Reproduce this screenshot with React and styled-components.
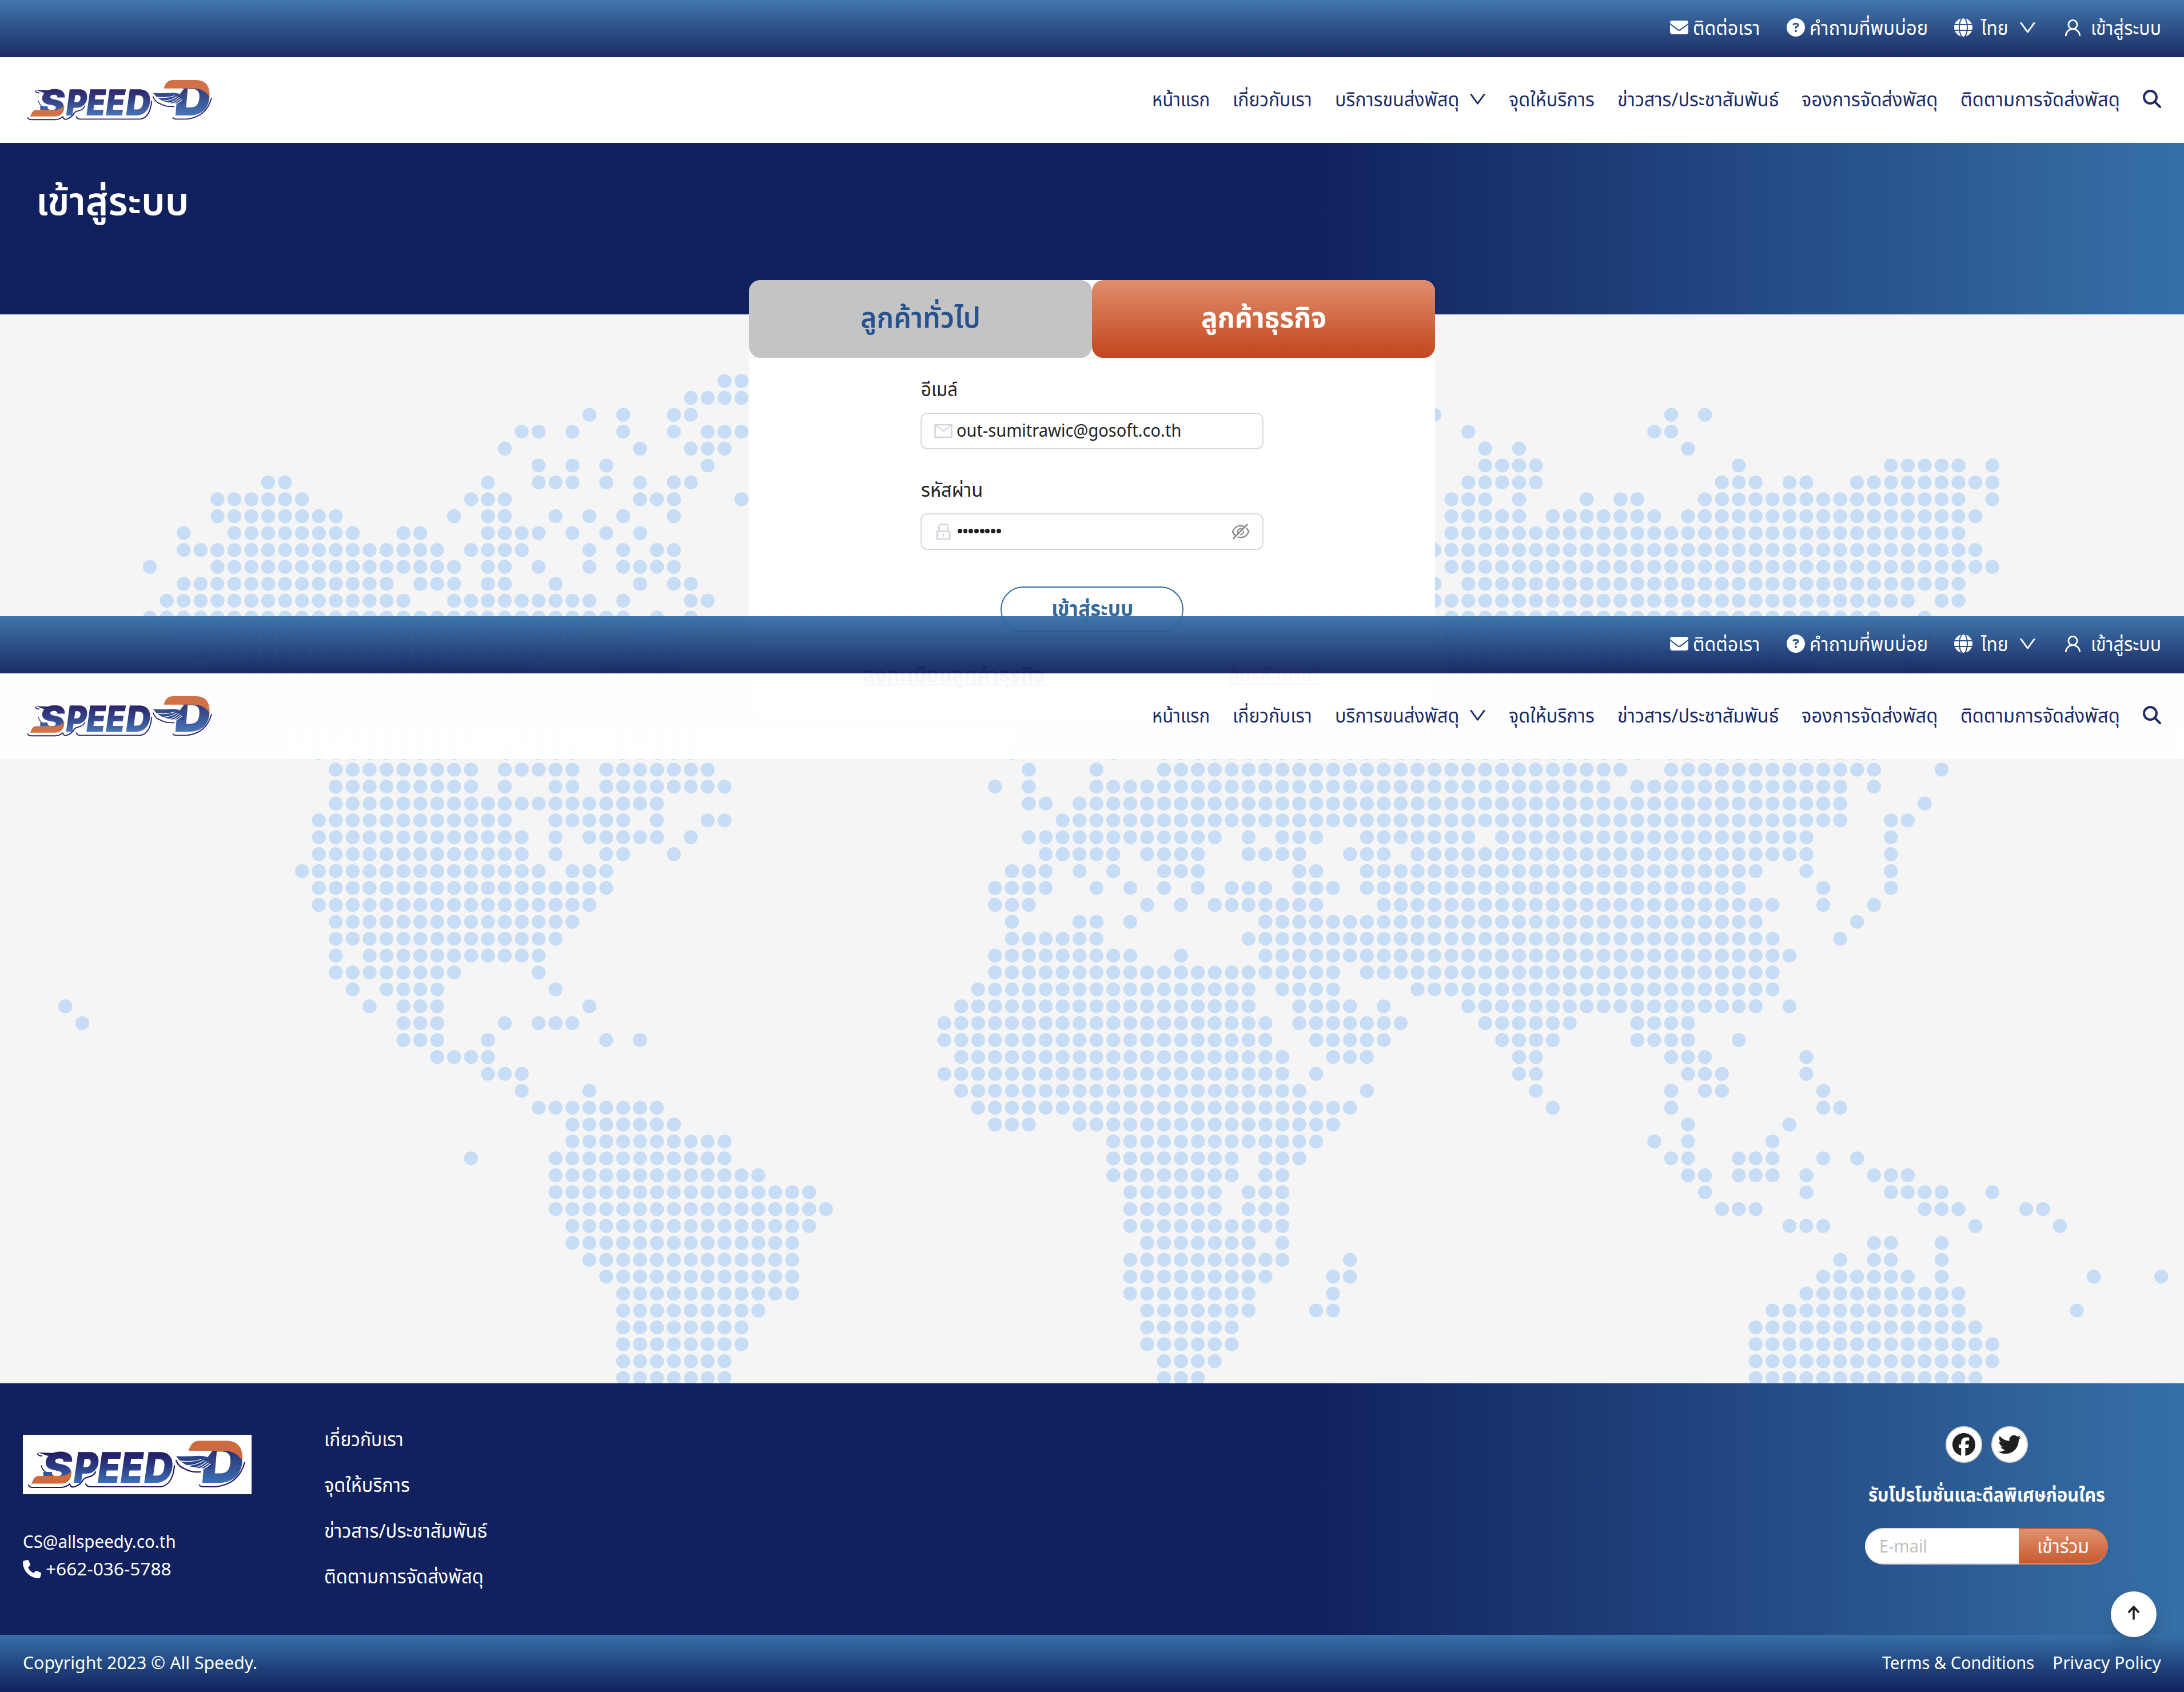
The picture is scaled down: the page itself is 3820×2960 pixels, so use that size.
import React, { useLayoutEffect, useRef, useState } from "react";
import styled, { createGlobalStyle, css } from "styled-components";
import {
  FaEnvelope,
  FaCircleQuestion,
  FaGlobe,
  FaMagnifyingGlass,
  FaPhone,
  FaFacebook,
  FaTwitter,
} from "react-icons/fa6";
import {
  AiOutlineDown,
  AiOutlineUser,
  AiOutlineMail,
  AiOutlineLock,
  AiOutlineEyeInvisible,
} from "react-icons/ai";

const color = {
  navy: "#10215d",
  blue: "#3670a8",
  link: "#336a9e",
  text: "#222222",
  line: "#d9d9d9",
  page: "#f5f5f5",
};

const GlobalStyle = createGlobalStyle`
  *, *::before, *::after { box-sizing: border-box; }
  body {
    margin: 0;
    background: #ffffff;
    color: ${color.text};
    font-family: "Noto Sans", "Noto Sans Thai", sans-serif;
    font-size: 32px;
  }
`;

/* ---------- text that fills a known measure ---------- */

const FitBox = styled.span`
  display: inline-block;
  flex: none;
  white-space: nowrap;
  line-height: inherit;
  text-align: left;
  font-size: ${(p) => (p.$latin ? 0.94 : 1.05)}em;
`;

const FitInner = styled.span`
  display: inline-block;
  transform-origin: 0 50%;
`;

function Fit({ w, latin, children }) {
  const ref = useRef(null);
  const [scale, setScale] = useState(1);
  useLayoutEffect(() => {
    if (ref.current) setScale(w / ref.current.offsetWidth);
  }, [w, children]);
  return (
    <FitBox $latin={latin} style={{ width: w }}>
      <FitInner ref={ref} style={{ transform: `scaleX(${scale})` }}>
        {children}
      </FitInner>
    </FitBox>
  );
}

/* ---------- logo ---------- */

const LogoSvg = styled.svg`
  display: block;
  flex: none;
  width: ${(p) => p.$width}px;
  height: ${(p) => p.$width * 0.26}px;
  overflow: visible;
  background: #ffffff;
`;

const LogoLetter = styled.text`
  font-family: Inter, "Liberation Sans", sans-serif;
  font-weight: 900;
`;

const LETTERS = [
  { ch: "S", x: 31, w: 53 },
  { ch: "P", x: 86, w: 43 },
  { ch: "E", x: 128, w: 39 },
  { ch: "E", x: 168, w: 39 },
  { ch: "D", x: 209, w: 51 },
];

function Logo({ width, id }) {
  const ink = `url(#${id}-ink)`;
  const inkD = `url(#${id}-inkd)`;
  return (
    <LogoSvg $width={width} viewBox="0 0 400 104">
      <defs>
        <linearGradient id={`${id}-ink`} gradientUnits="userSpaceOnUse" x1="0" y1="-54" x2="0" y2="0">
          <stop offset="0" stopColor="#231a63" />
          <stop offset="0.45" stopColor="#2a3a82" />
          <stop offset="1" stopColor="#3d6fb5" />
        </linearGradient>
        <linearGradient id={`${id}-inkd`} gradientUnits="userSpaceOnUse" x1="0" y1="-58" x2="0" y2="0">
          <stop offset="0" stopColor="#26306f" />
          <stop offset="1" stopColor="#3d6fb5" />
        </linearGradient>
      </defs>
      <g fill="none" stroke="#231a63" strokeWidth="2.2" strokeLinecap="round" strokeLinejoin="round">
        <path d="M26 33 Q27 37 33 37" />
        <path d="M32 54 Q34 62 41 66" strokeWidth="1.6" />
        <path d="M10 88 Q11 92 17 92 H68 Q77 91 82 86 Q84 93 90 91 Q101 88 106 78 Q109 75 114 74 Q124 72 127 65" />
        <path d="M110 86 Q112 91 118 91 H241 Q262 88 265 54" />
        <path d="M268 45 Q272 56 284 60 Q294 66 311 65" />
        <path d="M309 88 Q310 91 316 91 H338 Q378 86 388 48" />
      </g>
      {LETTERS.map((l, i) => (
        <g key={i} transform={`translate(${l.x} 84) skewX(-8)`}>
          <LogoLetter fontSize="74" textLength={l.w} lengthAdjust="spacingAndGlyphs" fill={ink}>
            {l.ch}
          </LogoLetter>
        </g>
      ))}
      <path d="M26 31 L60 32 L44 37 Z" fill="#231a63" />
      <path d="M15 85.5 L19 77 Q22 72 29 72 H66 Q80 71 85 63 Q86 76 78 82 Q73 85.5 66 85.5 Z" fill="#cf6a3f" />
      <g transform="translate(309 84) skewX(-5)">
        <LogoLetter fontSize="98" textLength="75" lengthAdjust="spacingAndGlyphs" fill={inkD}>
          D
        </LogoLetter>
      </g>
      <path d="M288 30 V8 H330 V30 Z" fill="#ffffff" />
      <path d="M312 29 H331 L325 37 L318 46 H312 Z" fill="#ffffff" />
      <path d="M290 28 Q294 10.5 309 10.5 H358 Q386 12 384 45 Q372 28 352 28 Z" fill="#cf6a3f" />
      <path
        d="M268 37.5 Q290 38 303 37 Q322 35 330 45 Q334 50 332 58 Q325 63 320 57 Q310 60 300 57 Q280 54 268 37.5 Z"
        fill="#2b4488"
      />
      <g fill="none" stroke="#ffffff" strokeWidth="1.3" strokeLinecap="round">
        <path d="M275 46 Q298 48 312 43" />
        <path d="M286 54 Q304 53 317 45" />
        <path d="M300 58 Q312 55 321 47" />
        <path d="M309 59 Q318 55 325 49" />
        <path d="M317 59 Q324 55 328 51" />
      </g>
    </LogoSvg>
  );
}

/* ---------- header ---------- */

const Header = styled.header`
  position: absolute;
  left: 0;
  top: ${(p) => p.$top}px;
  z-index: 5;
  width: 100%;
  opacity: 0.95;
`;

const TopBar = styled.div`
  display: flex;
  justify-content: flex-end;
  align-items: center;
  height: 100px;
  padding: 0 40px 4px;
  color: #ffffff;
  background: linear-gradient(180deg, ${color.blue}, ${color.navy});
`;

const TopLink = styled.a`
  display: flex;
  align-items: center;
  gap: ${(p) => p.$gap}px;
  margin-left: ${(p) => p.$before}px;
  line-height: 48px;
`;

const IconSlot = styled.span`
  display: flex;
  flex: none;
  color: ${(p) => p.$color || "inherit"};
  font-size: ${(p) => p.$size}px;
`;

const NavBar = styled.nav`
  display: flex;
  justify-content: space-between;
  align-items: center;
  height: 150px;
  padding: 0 40px;
  color: ${color.navy};
  background: #ffffff;
`;

const NavList = styled.div`
  display: flex;
  align-items: center;
  gap: 40px;
  padding-bottom: 4px;
`;

const NavItem = styled.a`
  display: flex;
  align-items: center;
  gap: 14px;
  margin-right: ${(p) => (p.$menu ? -4 : 0)}px;
  line-height: 48px;
`;

const NAV = [
  { label: "หน้าแรก", w: 101 },
  { label: "เกี่ยวกับเรา", w: 139 },
  { label: "บริการขนส่งพัสดุ", w: 217, menu: true },
  { label: "จุดให้บริการ", w: 150 },
  { label: "ข่าวสาร/ประชาสัมพันธ์", w: 282 },
  { label: "จองการจัดส่งพัสดุ", w: 238 },
  { label: "ติดตามการจัดส่งพัสดุ", w: 279 },
];

function SiteHeader({ top, id }) {
  return (
    <Header $top={top}>
      <TopBar>
        <TopLink $gap={8} $before={0}>
          <IconSlot $size={32}><FaEnvelope /></IconSlot>
          <Fit w={117}>ติดต่อเรา</Fit>
        </TopLink>
        <TopLink $gap={8} $before={47}>
          <IconSlot $size={32}><FaCircleQuestion /></IconSlot>
          <Fit w={207}>คำถามที่พบบ่อย</Fit>
        </TopLink>
        <TopLink $gap={15} $before={46}>
          <IconSlot $size={32}><FaGlobe /></IconSlot>
          <Fit w={48}>ไทย</Fit>
          <IconSlot $size={37}><AiOutlineDown /></IconSlot>
        </TopLink>
        <TopLink $gap={13} $before={42}>
          <IconSlot $size={37}><AiOutlineUser /></IconSlot>
          <Fit w={123}>เข้าสู่ระบบ</Fit>
        </TopLink>
      </TopBar>
      <NavBar>
        <Logo width={340} id={id} />
        <NavList>
          {NAV.map((n) => (
            <NavItem key={n.label} $menu={n.menu}>
              <Fit w={n.w}>{n.label}</Fit>
              {n.menu && <IconSlot $size={37}><AiOutlineDown /></IconSlot>}
            </NavItem>
          ))}
          <IconSlot $size={32}><FaMagnifyingGlass /></IconSlot>
        </NavList>
      </NavBar>
    </Header>
  );
}

/* ---------- dotted world map ---------- */

const MAP_ROWS = [
  "39-40",
  "37-40",
  "31,33,36-37,81,95,97",
  "27-28,30,33,36,38-40,83,94-95",
  "26,34,37-39,84,86,96",
  "28,30,32,38,84-87,99,108-112,114",
  "12-13,25,28-30,32,34,36-37,83-87,98-100,102-103,106-114",
  "9-14,24-26,34-36,40,82-84,86,90,92-93,97-112,114",
  "9-16,23,25-26,29,31,33,36,82-86,88-94,96-113",
  "7,10-17,20-21,25-28,30,32,34,82-112",
  "7-22,24-27,31,33,35-36,81-113",
  "5,9-23,25-26,28,31,33-36,82-114",
  "7-19,21-23,25-26,29,34,36-37,81,83-112",
  "6-20,23-31,33,37-38,81-109,111-112",
  "5-33,35,37,82-107,110",
  "7-30,34-36,82-106,110",
  "8-28,33-36,82-104,109",
  "9-27,32-36,82-103,109-110",
  "12-26,32-35,82-103,109-111",
  "13-26,32-36,82-104,110",
  "14-25,28,32-36,61-64,66-104,110",
  "14-24,27-29,33-37,60,62-63,66-69,71-104",
  "15-23,26,28-30,33-37,56,62,65-93,95-107",
  "16-24,26-30,32-38,57,61,65-92,95-107,111",
  "16-24,26,29-30,32-39,55,57,61-91,93-105,107",
  "16-35,57-58,60-105,110",
  "15-26,29-33,35,38-39,59-105,108-109",
  "15-27,29,31-35,37,57-68,70,72-74,77-83,85-103,108",
  "15-27,29,32-33,36,58-62,64-67,70-73,76-78,80-103,108",
  "14-28,30-32,56-58,60,62,65-67,73-74,77-100,103,108",
  "15-32,55-58,61,63,65,67,69-71,73-75,77-99,104,108",
  "15-31,55-57,64,66,68-74,78-101,104,107",
  "16-30,56,60-61,63,71-100,106",
  "16-29,56-61,70-101,105",
  "16,18-28,55-63,66,71-102",
  "16-23,28,55-75,77-101",
  "17,19-22,29,54-70,72-75,80-101",
  "0,18,20-22,31,53-70,73-76,78,83-100,102",
  "1,20-22,26,28-30,52-71,73-79,84-89,93-96",
  "20-22,25,32,34,52-71,74-78,85-88,93-96,99",
  "22-25,53-72,75-77,86-87,95-97,103",
  "25-27,52-72,74,86-87,96-98,103",
  "27,31,53-73,77,87,95,97-98,104",
  "28-35,54-76,88,95,104-105",
  "30-36,55-57,60-75,96,102",
  "30-39,62-74,94,96,101",
  "24,29-39,62-69,71-73,95-96,99-101,104,106",
  "29-41,62-69,71-72,96-97,99-101,103,107-109",
  "29-44,63-68,70-72,97,103,108-111,114",
  "29-45,63-68,70-72,98-100,110-112,116-117",
  "30-44,63-72,102-104,113,118",
  "30-43,64-70,72,107-108,111",
  "31-43,63-72,76,105,107-108,111",
  "32-43,63-71,75-76,104-109,111,120,124",
  "33-43,63-70,75,103-112",
  "33-41,64-70,74-75,101-112,119",
  "33-40,64-69,100-113",
  "33-40,64-69,100-114",
  "33-39,65-68,100-114",
  "33-39,65-67,100-113",
];

const STEP = 29.565;

const DOTS = MAP_ROWS.flatMap((row, r) =>
  row.split(",").flatMap((part) => {
    const [a, b = a] = part.split("-").map(Number);
    return Array.from({ length: b - a + 1 }, (_, i) => ({
      x: 114.3 + (a + i) * STEP,
      y: 116.5 + r * STEP,
    }));
  })
);

const MapSvg = styled.svg`
  position: absolute;
  inset: 0;
  width: 100%;
  height: 100%;
`;

function WorldMap() {
  return (
    <MapSvg viewBox="0 0 3820 1870" preserveAspectRatio="xMinYMin slice" fill="#c7ddf5">
      {DOTS.map((d, i) => (
        <circle key={i} cx={d.x} cy={d.y} r="12.2" />
      ))}
    </MapSvg>
  );
}

/* ---------- page ---------- */

const Page = styled.div`
  position: relative;
  display: flex;
  flex-direction: column;
  width: 3820px;
  height: 2960px;
  overflow: hidden;
  padding-top: 250px;
`;

const Banner = styled.section`
  flex: none;
  height: 300px;
  padding: 62px 63px 0;
  background: linear-gradient(90deg, ${color.navy} 60%, ${color.blue} 100%);
`;

const BannerTitle = styled.h1`
  margin: 0;
  color: #ffffff;
  font-size: 65px;
  font-weight: 600;
  line-height: 76px;
`;

const Main = styled.main`
  position: relative;
  display: flex;
  flex: none;
  justify-content: center;
  align-items: flex-start;
  height: 1870px;
  background: ${color.page};
`;

const Card = styled.section`
  position: relative;
  display: flex;
  flex-direction: column;
  width: 1200px;
  height: 770px;
  margin-top: -60px;
  border-radius: 20px 20px 40px 40px;
  background: #ffffff;
`;

const Tabs = styled.div`
  display: flex;
  flex: none;
  height: 136px;
  border-bottom: 2px solid #f0f0f0;
`;

const Tab = styled.div`
  display: flex;
  flex: none;
  justify-content: center;
  align-items: center;
  width: 600px;
  height: 136px;
  padding-bottom: 8px;
  border-radius: 20px;
  font-size: 48px;
  line-height: 72px;
  ${(p) =>
    p.$active
      ? css`
          color: #ffffff;
          font-weight: 700;
          background: linear-gradient(180deg, #e08e6c, #c3451e);
        `
      : css`
          color: #26528f;
          font-weight: 600;
          background: #c4c4c4;
        `}
`;

const Form = styled.div`
  display: flex;
  flex-direction: column;
  align-items: center;
  padding-top: 30px;
`;

const Field = styled.label`
  display: flex;
  flex-direction: column;
  gap: 18px;
  width: 600px;
  margin-bottom: 46px;
  line-height: 48px;
`;

const InputBox = styled.div`
  display: flex;
  align-items: center;
  height: 64px;
  padding: 0 20px;
  border: 2px solid ${color.line};
  border-radius: 12px;
  background: #ffffff;
  line-height: 56px;
`;

const FieldLabel = styled.div`
  height: 48px;
  padding-left: 1px;
`;

const InputValue = styled.div`
  display: flex;
  flex: 1;
  align-items: center;
  gap: 1.9px;
  padding: 0 0 2px ${(p) => p.$inset}px;
`;

const PasswordDot = styled.span`
  width: 7.8px;
  height: 7.8px;
  border-radius: 50%;
  background: ${color.text};
`;

const SignIn = styled.button`
  display: flex;
  justify-content: center;
  align-items: center;
  width: 320px;
  height: 80px;
  margin-top: 18px;
  padding: 0 0 5px;
  border: 2px solid ${color.link};
  border-radius: 40px;
  background: #ffffff;
  color: ${color.link};
  font: 700 36px/54px "Noto Sans", "Noto Sans Thai", sans-serif;
`;

const FormLinks = styled.div`
  display: flex;
  align-self: stretch;
  justify-content: space-between;
  padding: 47px 200px 0 199px;
  line-height: 54px;
`;

const FormLink = styled.a`
  color: ${(p) => p.$color};
  font-size: ${(p) => p.$size}px;
  font-weight: ${(p) => p.$weight};

  ${FitInner} {
    text-decoration: underline;
    text-decoration-thickness: 3px;
  }
`;

/* ---------- footer ---------- */

const Footer = styled.footer`
  display: flex;
  flex: none;
  height: 440px;
  padding: 0 40px;
  color: #ffffff;
  background: linear-gradient(90deg, ${color.navy} 60%, ${color.blue} 100%);
`;

const Contact = styled.div`
  display: flex;
  flex-direction: column;
  width: 400px;
  padding-top: 90px;
  line-height: 48px;
`;

const ContactLines = styled.div`
  display: flex;
  flex-direction: column;
  padding-top: 59px;
`;

const ContactLine = styled.div`
  display: flex;
  align-items: center;
  gap: 8px;
  height: 48px;
`;

const FooterLinks = styled.div`
  display: flex;
  flex-direction: column;
  gap: 32px;
  padding: 73px 0 0 127px;
  line-height: 48px;
`;

const Follow = styled.div`
  display: flex;
  flex-direction: column;
  align-items: center;
  width: 425px;
  margin: 0 93px 0 auto;
  padding-top: 75px;
`;

const Socials = styled.div`
  display: flex;
  gap: 16px;
`;

const SocialButton = styled.a`
  display: flex;
  justify-content: center;
  align-items: center;
  width: 64px;
  height: 64px;
  border: 2px solid ${color.line};
  border-radius: 50%;
  background: #ffffff;
  color: #1f1f1f;
  font-size: 40px;
`;

const FollowTitle = styled.div`
  height: 114px;
  padding-top: 28px;
  font-weight: 700;
  line-height: 54px;
`;

const Subscribe = styled.div`
  display: flex;
  width: 425px;
  height: 64px;
  line-height: 58px;
`;

const EmailBox = styled.div`
  flex: 1;
  padding-left: 25px;
  border-top: 2px solid ${color.line};
  border-bottom: 2px solid ${color.line};
  border-radius: 32px 0 0 32px;
  background: #ffffff;
  color: #bfbfbf;
`;

const JoinButton = styled.div`
  width: 156px;
  padding-left: 32px;
  border-top: 2px solid #c95a2f;
  border-bottom: 2px solid #e0906f;
  border-radius: 0 32px 32px 0;
  background: linear-gradient(180deg, #e09270, #c95a2f) padding-box;
`;

const BottomBar = styled.div`
  display: flex;
  flex: none;
  justify-content: space-between;
  align-items: center;
  height: 100px;
  padding: 0 40px 3px;
  color: #ffffff;
  line-height: 48px;
  background: linear-gradient(180deg, ${color.blue}, ${color.navy});
`;

const Legal = styled.div`
  display: flex;
  gap: 32px;
`;

const BackTop = styled.button`
  position: absolute;
  right: 48px;
  bottom: 96px;
  z-index: 6;
  display: flex;
  justify-content: center;
  align-items: center;
  width: 80px;
  height: 80px;
  padding: 0 0 6px;
  border: 0;
  border-radius: 50%;
  background: #ffffff;
  box-shadow: 0 12px 32px rgba(0, 0, 0, 0.12), 0 6px 12px -8px rgba(0, 0, 0, 0.2);
`;

function ArrowUp() {
  return (
    <svg width="24" height="28" viewBox="0 0 24 28" fill="none" stroke="#1f1f1f" strokeWidth="3.6" strokeLinecap="round" strokeLinejoin="round">
      <path d="M12 25 V4 M3.8 13 L12 4 L20.2 13" />
    </svg>
  );
}

const FOOTER_LINKS = [
  { label: "เกี่ยวกับเรา", w: 139 },
  { label: "จุดให้บริการ", w: 150 },
  { label: "ข่าวสาร/ประชาสัมพันธ์", w: 285 },
  { label: "ติดตามการจัดส่งพัสดุ", w: 279 },
];

export default function App() {
  return (
    <Page>
      <GlobalStyle />
      <SiteHeader top={0} id="logo-top" />
      <Banner>
        <BannerTitle>
          <Fit w={268}>เข้าสู่ระบบ</Fit>
        </BannerTitle>
      </Banner>
      <Main>
        <WorldMap />
        <Card>
          <Tabs>
            <Tab><Fit w={210}>ลูกค้าทั่วไป</Fit></Tab>
            <Tab $active><Fit w={219}>ลูกค้าธุรกิจ</Fit></Tab>
          </Tabs>
          <Form>
            <Field>
              <FieldLabel><Fit w={64}>อีเมล์</Fit></FieldLabel>
              <InputBox>
                <IconSlot $size={36} $color="#d3d4dd"><AiOutlineMail /></IconSlot>
                <InputValue $inset={5}><Fit latin w={393}>out-sumitrawic@gosoft.co.th</Fit></InputValue>
              </InputBox>
            </Field>
            <Field>
              <FieldLabel><Fit w={108}>รหัสผ่าน</Fit></FieldLabel>
              <InputBox>
                <IconSlot $size={36} $color="#d3d4dd"><AiOutlineLock /></IconSlot>
                <InputValue $inset={7}>
                  {Array.from({ length: 8 }, (_, i) => <PasswordDot key={i} />)}
                </InputValue>
                <IconSlot $size={36} $color="#8c8c8c"><AiOutlineEyeInvisible /></IconSlot>
              </InputBox>
            </Field>
            <SignIn><Fit w={143}>เข้าสู่ระบบ</Fit></SignIn>
            <FormLinks>
              <FormLink $color={color.link} $size={36} $weight={700}>
                <Fit w={318}>ลงทะเบียนลูกค้าธุรกิจ</Fit>
              </FormLink>
              <FormLink $color="#d9703f" $size={32} $weight={400}>
                <Fit w={161}>ลืมรหัสผ่าน?</Fit>
              </FormLink>
            </FormLinks>
          </Form>
        </Card>
      </Main>
      <SiteHeader top={1078} id="logo-mid" />
      <Footer>
        <Contact>
          <Logo width={400} id="logo-foot" />
          <ContactLines>
            <ContactLine><Fit latin w={268}>CS@allspeedy.co.th</Fit></ContactLine>
            <ContactLine>
              <IconSlot $size={32}><FaPhone /></IconSlot>
              <Fit latin w={220}>+662-036-5788</Fit>
            </ContactLine>
          </ContactLines>
        </Contact>
        <FooterLinks>
          {FOOTER_LINKS.map((l) => (
            <Fit key={l.label} w={l.w}>{l.label}</Fit>
          ))}
        </FooterLinks>
        <Follow>
          <Socials>
            <SocialButton><FaFacebook /></SocialButton>
            <SocialButton><FaTwitter /></SocialButton>
          </Socials>
          <FollowTitle><Fit w={414}>รับโปรโมชั่นและดีลพิเศษก่อนใคร</Fit></FollowTitle>
          <Subscribe>
            <EmailBox><Fit latin w={84}>E-mail</Fit></EmailBox>
            <JoinButton><Fit w={91}>เข้าร่วม</Fit></JoinButton>
          </Subscribe>
        </Follow>
      </Footer>
      <BottomBar>
        <Fit latin w={410}>Copyright 2023 © All Speedy.</Fit>
        <Legal>
          <Fit latin w={266}>Terms &amp; Conditions</Fit>
          <Fit latin w={190}>Privacy Policy</Fit>
        </Legal>
      </BottomBar>
      <BackTop><ArrowUp /></BackTop>
    </Page>
  );
}
